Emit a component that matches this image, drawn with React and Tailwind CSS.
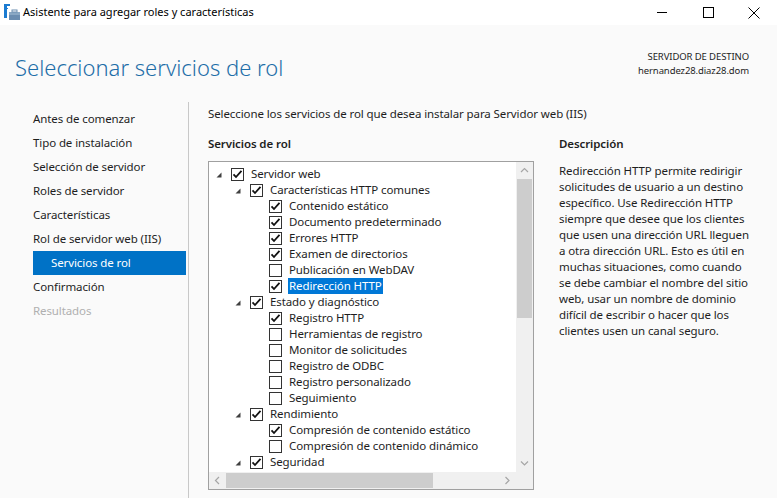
import React from "react";

const rows = [
  { l: 0, t: "Servidor web", c: true, e: true },
  { l: 1, t: "Características HTTP comunes", c: true, e: true },
  { l: 2, t: "Contenido estático", c: true },
  { l: 2, t: "Documento predeterminado", c: true },
  { l: 2, t: "Errores HTTP", c: true },
  { l: 2, t: "Examen de directorios", c: true },
  { l: 2, t: "Publicación en WebDAV", c: false },
  { l: 2, t: "Redirección HTTP", c: true, s: true },
  { l: 1, t: "Estado y diagnóstico", c: true, e: true },
  { l: 2, t: "Registro HTTP", c: true },
  { l: 2, t: "Herramientas de registro", c: false },
  { l: 2, t: "Monitor de solicitudes", c: false },
  { l: 2, t: "Registro de ODBC", c: false },
  { l: 2, t: "Registro personalizado", c: false },
  { l: 2, t: "Seguimiento", c: false },
  { l: 1, t: "Rendimiento", c: true, e: true },
  { l: 2, t: "Compresión de contenido estático", c: true },
  { l: 2, t: "Compresión de contenido dinámico", c: false },
  { l: 1, t: "Seguridad", c: true, e: true },
];

const nav = [
  "Antes de comenzar",
  "Tipo de instalación",
  "Selección de servidor",
  "Roles de servidor",
  "Características",
  "Rol de servidor web (IIS)",
];

const desc = [
  "Redirección HTTP permite redirigir",
  "solicitudes de usuario a un destino",
  "específico. Use Redirección HTTP",
  "siempre que desee que los clientes",
  "que usen una dirección URL lleguen",
  "a otra dirección URL. Esto es útil en",
  "muchas situaciones, como cuando",
  "se debe cambiar el nombre del sitio",
  "web, usar un nombre de dominio",
  "difícil de escribir o hacer que los",
  "clientes usen un canal seguro.",
];

function Check({ on }) {
  return (
    <div className="w-[13px] h-[13px] border border-[#333333] bg-white flex items-center justify-center shrink-0">
      {on && (
        <svg width="11" height="11" viewBox="0 0 11 11">
          <polyline points="1.5,5.3 4,8 9.5,1.8" fill="none" stroke="#111" strokeWidth="1.8" />
        </svg>
      )}
    </div>
  );
}

function Row({ r }) {
  return (
    <div className="flex items-center h-4 whitespace-nowrap" style={{ paddingLeft: 7 + r.l * 19 }}>
      <div className="w-[15px] h-4 flex items-center shrink-0">
        {r.e && (
          <svg width="6" height="6" viewBox="0 0 6 6" className="mt-[2px]">
            <polygon points="5.5,0.5 5.5,5.5 0.5,5.5" fill="#404040" />
          </svg>
        )}
      </div>
      <Check on={r.c} />
      <span
        className={
          "ml-[6px] px-[1px] h-4 leading-4 " +
          (r.s ? "bg-[#0078d7] text-white" : "text-[#1e1e1e]")
        }
      >
        {r.t}
      </span>
    </div>
  );
}

function Chevron({ dir }) {
  const pts = {
    up: "1,5 4.5,1.5 8,5",
    down: "1,1.5 4.5,5 8,1.5",
    left: "5,1 1.5,4.5 5,8",
    right: "1.5,1 5,4.5 1.5,8",
  }[dir];
  const w = dir === "up" || dir === "down" ? 9 : 7;
  const h = dir === "up" || dir === "down" ? 7 : 9;
  return (
    <svg width={w} height={h} viewBox={`0 0 ${w} ${h}`}>
      <polyline points={pts} fill="none" stroke="#a6a6a6" strokeWidth="1.2" />
    </svg>
  );
}

export default function App() {
  return (
    <div className="w-[777px] h-[498px] overflow-hidden bg-[#fafafa] font-['Noto_Sans',sans-serif] text-[11.5px] tracking-[-0.1px] text-[#1e1e1e] flex flex-col">
      {/* Title bar */}
      <div className="h-[25px] bg-white flex items-center shrink-0">
        <svg width="20" height="20" viewBox="0 0 20 20" className="ml-[2px] mb-[1px]">
          <rect x="2" y="2" width="3" height="14" fill="#1a7bd1" />
          <rect x="2" y="2" width="6" height="2" fill="#1a7bd1" />
          <rect x="2" y="6" width="4" height="1" fill="#1a7bd1" />
          <rect x="7" y="10" width="11" height="8" fill="#6b8db0" />
          <rect x="7" y="10" width="11" height="3" fill="#8aa8c4" />
          <rect x="10" y="8" width="5" height="2" fill="none" stroke="#6b8db0" strokeWidth="1" />
        </svg>
        <span className="ml-[1px] text-[11px] tracking-normal text-black">Asistente para agregar roles y características</span>
        <div className="ml-auto flex items-center h-full">
          <div className="w-[46px] h-full flex items-center justify-center">
            <div className="w-[10px] h-px bg-black" />
          </div>
          <div className="w-[46px] h-full flex items-center justify-center">
            <div className="w-[11px] h-[11px] border border-black" />
          </div>
          <div className="w-[46px] h-full flex items-center justify-center">
            <svg width="12" height="12" viewBox="0 0 12 12">
              <path d="M0.5,0.5 L11.5,11.5 M11.5,0.5 L0.5,11.5" stroke="#000" strokeWidth="1" />
            </svg>
          </div>
        </div>
      </div>

      {/* Header */}
      <div className="h-[77px] shrink-0 flex items-start justify-between pl-[15px] pr-[28px]">
        <div className="mt-[26px] text-[22px] font-light text-[#1e6ea8] leading-[32px] tracking-normal">
          Seleccionar servicios de rol
        </div>
        <div className="mt-[25px] text-right text-[9.5px] leading-[14px] tracking-[-0.1px] text-[#1e1e1e]">
          <div>SERVIDOR DE DESTINO</div>
          <div>hernandez28.diaz28.dom</div>
        </div>
      </div>

      {/* Body */}
      <div className="flex flex-1 min-h-0">
        <div className="w-[189px] shrink-0 border-r border-[#c8c8c8] pt-[5px] pl-[33px]">
          {nav.map((n) => (
            <div key={n} className="h-6 leading-6">{n}</div>
          ))}
          <div className="h-6 leading-6 w-[153px] bg-[#0072c6] text-white pl-[18px]">Servicios de rol</div>
          <div className="h-6 leading-6">Confirmación</div>
          <div className="h-6 leading-6 text-[#b0b0b0]">Resultados</div>
        </div>

        <div className="flex-1 pl-[19px] pt-[4px]">
          <div className="leading-4">Seleccione los servicios de rol que desea instalar para Servidor web (IIS)</div>
          <div className="flex mt-[14px]">
            <div className="w-[326px] shrink-0">
              <div className="font-semibold leading-4 h-4">Servicios de rol</div>
              <div className="mt-[9px] w-[326px] h-[329px] border border-[#a0a0a0] bg-white flex flex-col">
                <div className="flex flex-1 min-h-0">
                  <div className="flex-1 overflow-hidden pt-[4px]">
                    {rows.map((r, i) => (
                      <Row key={i} r={r} />
                    ))}
                  </div>
                  <div className="w-[17px] bg-[#f0f0f0] flex flex-col shrink-0">
                    <div className="h-[17px] flex items-center justify-center"><Chevron dir="up" /></div>
                    <div className="h-[139px] mx-[1px] bg-[#cdcdcd]" />
                    <div className="flex-1" />
                    <div className="h-[17px] flex items-center justify-center"><Chevron dir="down" /></div>
                  </div>
                </div>
                <div className="h-[17px] flex bg-[#f0f0f0] shrink-0">
                  <div className="w-[17px] flex items-center justify-center"><Chevron dir="left" /></div>
                  <div className="w-[207px] my-[1px] bg-[#cdcdcd]" />
                  <div className="flex-1" />
                  <div className="w-[17px] flex items-center justify-center"><Chevron dir="right" /></div>
                  <div className="w-[17px] bg-[#f0f0f0]" />
                </div>
              </div>
            </div>
            <div className="ml-[25px]">
              <div className="font-semibold leading-4 h-4">Descripción</div>
              <div className="mt-[11px] leading-4">
                {desc.map((d) => (
                  <div key={d} className="whitespace-nowrap">{d}</div>
                ))}
              </div>
            </div>
          </div>
        </div>
      </div>
    </div>
  );
}
